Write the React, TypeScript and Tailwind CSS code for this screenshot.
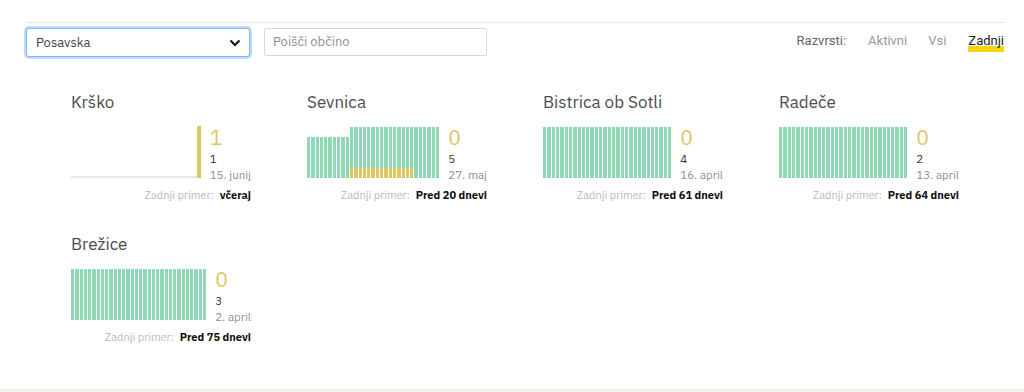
import React from "react";

type Bar = { h: number; y?: number };

type Card = {
  name: string;
  width: number;
  bars: Bar[];
  big: string;
  count: string;
  date: string;
  last: string;
  empty?: boolean;
};

const full = (n: number): Bar[] => Array.from({ length: n }, () => ({ h: 51 }));

const sevnica: Bar[] = [
  ...Array.from({ length: 10 }, () => ({ h: 41 })),
  ...Array.from({ length: 15 }, () => ({ h: 51, y: 10 })),
  ...Array.from({ length: 6 }, () => ({ h: 51 })),
];

const cards: Card[] = [
  { name: "Krško", width: 132, bars: [], big: "1", count: "1", date: "15. junij", last: "včeraj", empty: true },
  { name: "Sevnica", width: 136, bars: sevnica, big: "0", count: "5", date: "27. maj", last: "Pred 20 dnevi" },
  { name: "Bistrica ob Sotli", width: 130, bars: full(30), big: "0", count: "4", date: "16. april", last: "Pred 61 dnevi" },
  { name: "Radeče", width: 131, bars: full(30), big: "0", count: "2", date: "13. april", last: "Pred 64 dnevi" },
  { name: "Brežice", width: 138, bars: full(32), big: "0", count: "3", date: "2. april", last: "Pred 75 dnevi" },
];

function Chart({ c }: { c: Card }) {
  if (c.empty) {
    return (
      <div className="relative h-[52px]" style={{ width: c.width }}>
        <div className="absolute left-0 bottom-0 h-[2px] bg-[#e8e8e8]" style={{ width: c.width - 4 }} />
        <div className="absolute right-0 bottom-0 h-[52px] w-[4px] bg-[#dcc766]" />
      </div>
    );
  }
  return (
    <div className="flex h-[52px] items-end gap-px" style={{ width: c.width }}>
      {c.bars.map((b, i) => (
        <div key={i} className="flex flex-1 flex-col justify-end bg-[#8fd8b5]" style={{ height: b.h }}>
          {b.y ? <div className="w-full bg-[#dec862]" style={{ height: b.y }} /> : null}
        </div>
      ))}
    </div>
  );
}

function CardView({ c }: { c: Card }) {
  return (
    <div className="w-[180px]">
      <div className="h-[22px] text-[17px] leading-[22px] text-[#4a4d52]">{c.name}</div>
      <div className="mt-[13px] flex">
        <Chart c={c} />
        <div className="ml-[9px] flex h-[52px] flex-col">
          <div className="text-[21px] leading-[22px] text-[#dcc766]">{c.big}</div>
          <div className="mt-[4px] text-[11.5px] leading-[14px] text-[#333]">{c.count}</div>
          <div className="mt-[2px] whitespace-nowrap text-[11.5px] leading-[14px] text-[#8a8e94]">{c.date}</div>
        </div>
      </div>
      <div className="mt-[10px] flex justify-end whitespace-nowrap text-[11px] leading-[14px]">
        <span className="text-[#b5b9bf]">Zadnji primer:</span>
        <span className="ml-[6px] font-bold text-[#111]">{c.last}</span>
      </div>
    </div>
  );
}

export default function App() {
  return (
    <div
      className="relative h-[392px] w-[1024px] overflow-hidden bg-white"
      style={{ fontFamily: '"IBM Plex Sans", "Noto Sans", sans-serif' }}
    >
      <div className="ml-[26px] mr-[20px] pt-[22px]">
        <div className="border-t border-[#e6e6e6]" />
        <div className="mt-[5px] flex items-start">
          <div className="flex h-[29px] w-[224px] items-center justify-between rounded-[3px] border border-[#7fb6f2] bg-white pl-[9px] pr-[8px] shadow-[0_0_0_2px_rgba(150,195,245,0.6)]">
            <span className="text-[13px] text-[#444]">Posavska</span>
            <svg width="12" height="8" viewBox="0 0 12 8">
              <path d="M1.5 1.5 L6 6 L10.5 1.5" fill="none" stroke="#111" strokeWidth="2" />
            </svg>
          </div>
          <div className="ml-[14px] flex h-[28px] w-[223px] items-center rounded-[2px] border border-[#dadada] pl-[8px]">
            <span className="text-[13px] text-[#8f8f8f]">Poišči občino</span>
          </div>
          <div
            className="ml-auto mt-[5px] flex text-[13px] leading-[16px]"
            style={{ fontFamily: 'Roboto, "Liberation Sans", sans-serif' }}
          >
            <span className="text-[#666]">Razvrsti:</span>
            <span className="ml-[22px] text-[#999]">Aktivni</span>
            <span className="ml-[21px] text-[#999]">Vsi</span>
            <span className="relative ml-[22px]">
              <span className="absolute left-0 right-0 top-[13px] h-[6px] bg-[#f6d410]" />
              <span className="relative text-[#222]">Zadnji</span>
            </span>
          </div>
        </div>
      </div>
      <div className="mt-[34px] grid grid-cols-[repeat(4,180px)] gap-x-[56px] gap-y-[31px] pl-[71px]">
        {cards.map((c) => (
          <CardView key={c.name} c={c} />
        ))}
      </div>
      <div className="absolute bottom-0 left-0 right-0 h-[3px] border-t border-[#ebebe4] bg-[#f3f3ef]" />
    </div>
  );
}
